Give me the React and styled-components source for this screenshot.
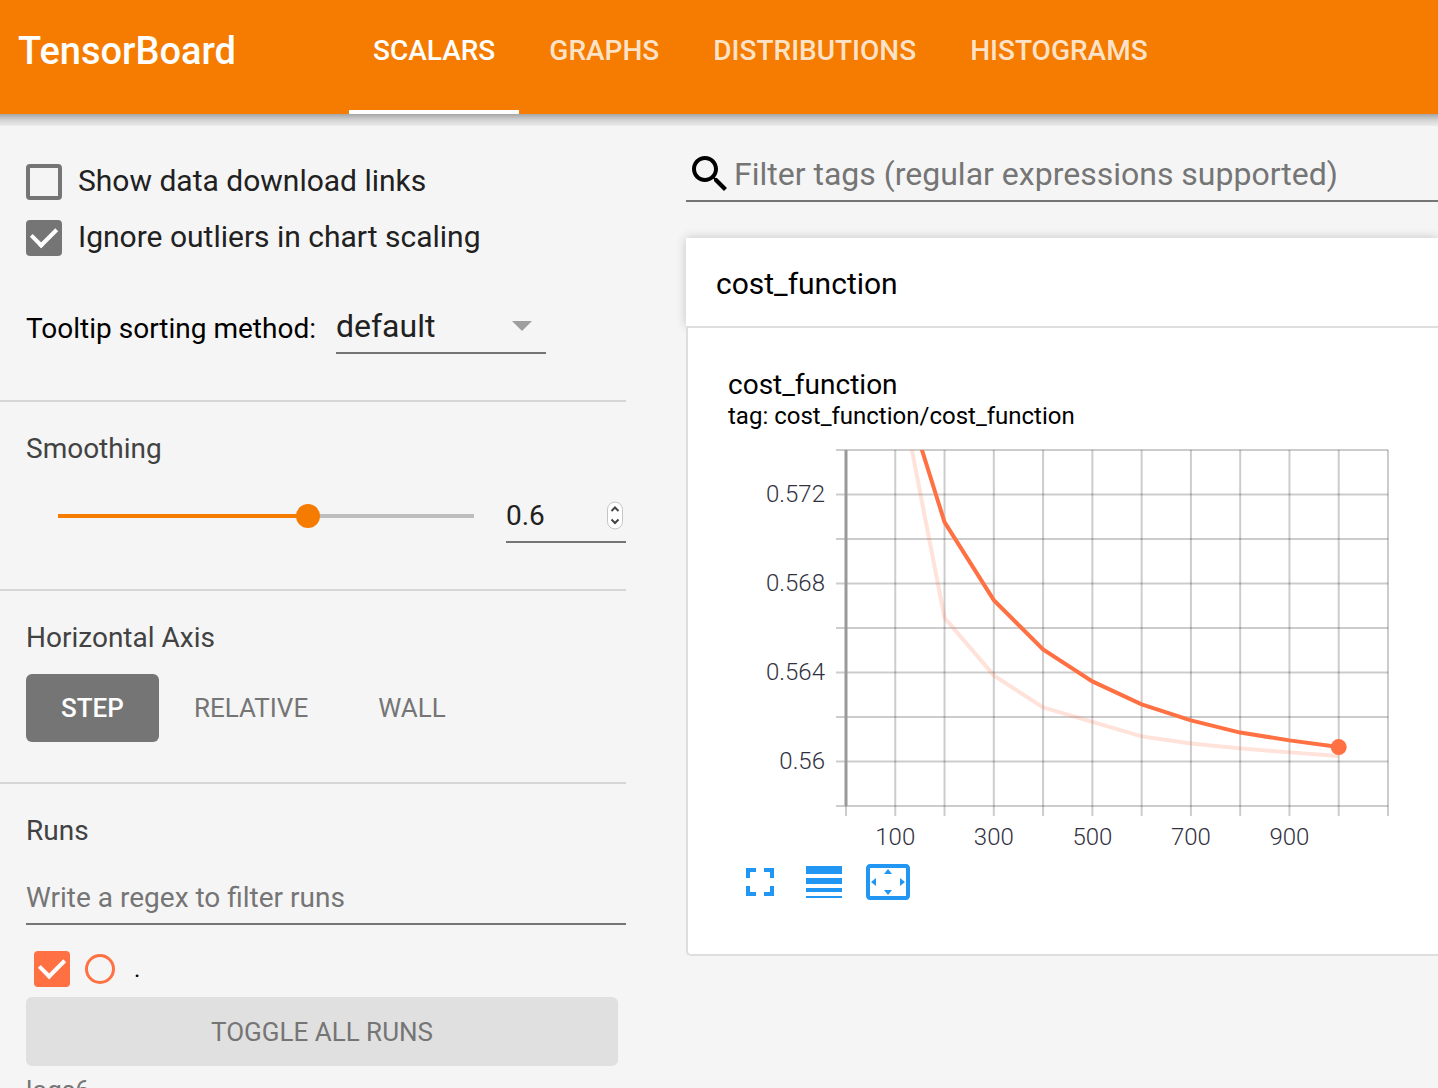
import React, { useState } from "react";
import styled, { createGlobalStyle } from "styled-components";

const GlobalStyle = createGlobalStyle`
  * { box-sizing: border-box; }
  body {
    margin: 0;
    background: #f5f5f5;
    color: #212121;
    font-family: Roboto, "Liberation Sans", sans-serif;
  }
  button, input, select { font-family: inherit; margin: 0; }
`;

const Page = styled.div`
  display: flex;
  flex-direction: column;
  height: 100vh;
  overflow: hidden;
`;

const Header = styled.header`
  position: relative;
  z-index: 1;
  flex: none;
  display: flex;
  height: 114px;
  background: #f57c00;
  color: #fff;
  &::after {
    content: "";
    position: absolute;
    top: 100%;
    left: 0;
    right: 0;
    height: 12px;
    background: linear-gradient(rgba(0, 0, 0, 0.32), rgba(0, 0, 0, 0.14) 50%, rgba(0, 0, 0, 0.04));
    pointer-events: none;
  }
`;

const Brand = styled.h1`
  flex: 0 0 331px;
  margin: 0 0 0 18px;
  font-size: 38px;
  font-weight: 500;
  line-height: 102px;
`;

const Tabs = styled.nav`
  display: flex;
  gap: 6px;
`;

const Tab = styled.button`
  padding: 0 24px 8px;
  border: 0;
  border-bottom: 4px solid ${(p) => (p.$active ? "#fff" : "transparent")};
  background: none;
  color: ${(p) => (p.$active ? "#fff" : "rgba(255, 255, 255, 0.8)")};
  font-size: 28px;
  font-weight: 500;
  line-height: 102px;
`;

const Body = styled.div`
  flex: 1;
  min-height: 0;
  display: grid;
  grid-template-columns: 626px minmax(0, 1fr);
  column-gap: 60px;
`;

const Sidebar = styled.aside`
  min-height: 0;
  overflow: hidden;
`;

const Section = styled.section`
  padding: ${(p) => p.$top || 30}px 0 ${(p) => p.$bottom || 46}px 26px;
  border-bottom: ${(p) => (p.$last ? "0" : "2px solid #d6d6d6")};
`;

const SectionTitle = styled.h2`
  margin: 0;
  color: #424242;
  font-size: 28px;
  font-weight: 400;
  line-height: 34px;
`;

const CheckRow = styled.div`
  display: flex;
  gap: 16px;
  height: 36px;
  margin-bottom: 20px;
  font-size: 30px;
  line-height: 34px;
`;

const CheckInput = styled.input`
  appearance: none;
  flex: none;
  display: grid;
  place-items: start center;
  width: 36px;
  height: 36px;
  border: 4px solid ${(p) => p.$color};
  border-radius: 4px;
  &:checked { background: ${(p) => p.$color}; }
  &:checked::after {
    content: "";
    width: 12px;
    height: 20px;
    margin-top: -2px;
    border: solid #fff;
    border-width: 0 4px 4px 0;
    transform: rotate(45deg);
  }
`;

const SortRow = styled.div`
  display: flex;
  align-items: flex-end;
  gap: 20px;
  margin-top: 44px;
  color: #000;
  font-size: 28px;
  line-height: 50px;
`;

const SelectField = styled.div`
  display: grid;
  align-items: center;
  width: 210px;
  border-bottom: 2px solid #757575;
  & > * { grid-area: 1 / 1; }
  svg { justify-self: end; margin-right: 14px; pointer-events: none; }
`;

const Select = styled.select`
  appearance: none;
  width: 100%;
  height: 52px;
  padding: 0;
  border: 0;
  background: none;
  color: #212121;
  font-size: 32px;
`;

const SliderRow = styled.div`
  display: flex;
  align-items: center;
  margin-top: 23px;
`;

const Slider = styled.input`
  appearance: none;
  flex: 1;
  min-width: 0;
  height: 24px;
  margin: 0 20px;
  background: linear-gradient(
    to right,
    transparent 12px,
    #f57c00 12px,
    #f57c00 60%,
    #bdbdbd 60%,
    #bdbdbd calc(100% - 12px),
    transparent calc(100% - 12px)
  ) center / 100% 4px no-repeat;
  &::-webkit-slider-thumb {
    appearance: none;
    width: 24px;
    height: 24px;
    border-radius: 50%;
    background: #f57c00;
  }
`;

const NumberField = styled.div`
  display: flex;
  align-items: center;
  width: 120px;
  border-bottom: 2px solid #757575;
`;

const NumberInput = styled.input`
  appearance: textfield;
  flex: 1;
  min-width: 0;
  height: 52px;
  padding: 0;
  border: 0;
  background: none;
  color: #212121;
  font-size: 28px;
  &::-webkit-inner-spin-button { appearance: none; }
`;

const ButtonRow = styled.div`
  display: flex;
  margin-top: 19px;
`;

const AxisButton = styled.button`
  height: 68px;
  padding: 0 35px;
  border: 0;
  border-radius: 6px;
  background: ${(p) => (p.$active ? "#757575" : "none")};
  color: ${(p) => (p.$active ? "#fff" : "#757575")};
  font-size: 26px;
  font-weight: ${(p) => (p.$active ? 500 : 400)};
`;

const RegexInput = styled.input`
  display: block;
  width: 100%;
  height: 54px;
  margin-top: 23px;
  padding: 0;
  border: 0;
  border-bottom: 2px solid #757575;
  background: none;
  font-size: 28px;
  &::placeholder { color: #757575; opacity: 1; }
`;

const RunRow = styled.div`
  display: flex;
  align-items: center;
  gap: 15px;
  margin: 26px 8px 10px;
`;

const RunColor = styled.button`
  width: 30px;
  height: 30px;
  padding: 0;
  border: 3px solid #ff7043;
  border-radius: 50%;
  background: none;
`;

const RunName = styled.label`
  padding-left: 4px;
  color: #000;
  font-size: 24px;
  line-height: 28px;
`;

const ToggleButton = styled.button`
  display: block;
  width: calc(100% - 8px);
  height: 69px;
  border: 0;
  border-radius: 6px;
  background: #e0e0e0;
  color: #757575;
  font-size: 26px;
`;

const LogDir = styled.div`
  margin-top: 8px;
  color: #757575;
  font-size: 26px;
  line-height: 32px;
`;

const Main = styled.main`
  min-width: 0;
  padding-top: 34px;
`;

const Search = styled.label`
  display: flex;
  align-items: center;
  height: 54px;
  border-bottom: 2px solid #757575;
  color: #000;
`;

const SearchInput = styled.input`
  flex: 1;
  min-width: 0;
  height: 52px;
  padding: 0;
  border: 0;
  background: none;
  font-size: 32px;
  &::placeholder { color: #757575; opacity: 1; }
`;

const CategoryTitle = styled.h3`
  margin: 36px 0 0;
  padding: 4px 30px 0;
  background: #fff;
  box-shadow: 0 0 10px rgba(0, 0, 0, 0.2);
  color: #000;
  font-size: 30px;
  font-weight: 400;
  line-height: 84px;
`;

const Pane = styled.div`
  position: relative;
  padding: 40px 0 48px 40px;
  border: 2px solid #dedede;
  border-right: 0;
  border-radius: 0 0 0 5px;
  background: #fff;
  color: #000;
`;

const ChartTitle = styled.div`
  font-size: 28px;
  line-height: 34px;
`;

const ChartTag = styled.div`
  padding-bottom: 2px;
  font-size: 24px;
  line-height: 28px;
`;

const Chart = styled.svg`
  display: block;
  width: 670px;
  height: 426px;
  text { font-size: 24px; font-weight: 300; fill: #32313f; }
`;

const Tools = styled.div`
  display: flex;
  gap: 16px;
  padding-left: 8px;
`;

const ToolButton = styled.button`
  width: 48px;
  height: 48px;
  padding: 0;
  border: 0;
  background: none;
  color: #2196f3;
  svg { display: block; }
`;

const Icon = ({ d }) => (
  <svg width="48" height="48" viewBox="0 0 24 24" fill="currentColor" aria-hidden="true">
    <path d={d} />
  </svg>
);

const ICONS = {
  search:
    "M15.5 14h-.79l-.28-.27C15.41 12.59 16 11.11 16 9.5 16 5.91 13.09 3 9.5 3S3 5.91 3 9.5 5.91 16 9.5 16c1.61 0 3.09-.59 4.23-1.57l.27.28v.79l5 4.99L20.49 19l-4.99-5zm-6 0C7.01 14 5 11.99 5 9.5S7.01 5 9.5 5 14 7.01 14 9.5 11.99 14 9.5 14z",
  fullscreen:
    "M7 14H5v5h5v-2H7v-3zm-2-4h2V7h3V5H5v5zm12 7h-3v2h5v-5h-2v3zM14 5v2h3v3h2V5h-5z",
  lineWeight: "M3 17h18v-2H3v2zm0 3h18v-1H3v1zm0-7h18v-3H3v3zm0-9v4h18V4H3z",
  overscan:
    "M12.01 5.5L10 8h4l-1.99-2.5zM18 10v4l2.5-1.99L18 10zM6 10l-2.5 2.01L6 14v-4zm8 6h-4l2.01 2.5L14 16zm7-13H3c-1.1 0-2 .9-2 2v14c0 1.1.9 2 2 2h18c1.1 0 2-.9 2-2V5c0-1.1-.9-2-2-2zm0 16.01H3V4.99h18v14.02z",
};

const smoothed = [0.57783, 0.57076, 0.56725, 0.56504, 0.5636, 0.56257, 0.56185, 0.5613, 0.56095, 0.56065];
const raw = [0.57783, 0.56646, 0.56387, 0.56243, 0.56178, 0.56113, 0.56081, 0.56059, 0.56041, 0.56025];

const PLOT = { left: 118, right: 660, top: 18, bottom: 374 };
const xAt = (step) => PLOT.left + (step * (PLOT.right - PLOT.left)) / 1100;
const yAt = (value) => PLOT.top + ((0.574 - value) * (PLOT.bottom - PLOT.top)) / 0.016;
const toPoints = (values) => values.map((v, i) => `${xAt((i + 1) * 100)},${yAt(v)}`).join(" ");

function CostChart() {
  const columns = Array.from({ length: 12 }, (_, i) => i * 100);
  const rows = Array.from({ length: 9 }, (_, i) => 0.558 + i * 0.002);
  return (
    <Chart viewBox="0 0 670 426" role="img" aria-label="cost_function">
      <clipPath id="plot-area">
        <rect x={PLOT.left} y={PLOT.top} width={PLOT.right - PLOT.left} height={PLOT.bottom - PLOT.top} />
      </clipPath>
      <g stroke="#000" strokeOpacity="0.2" strokeWidth="2">
        {columns.map((s) => (
          <line key={s} x1={xAt(s)} x2={xAt(s)} y1={PLOT.top} y2={PLOT.bottom + 10} />
        ))}
        {rows.map((v) => (
          <line key={v} x1={PLOT.left - 10} x2={PLOT.right} y1={yAt(v)} y2={yAt(v)} />
        ))}
      </g>
      <line x1={PLOT.left} x2={PLOT.left} y1={PLOT.top} y2={PLOT.bottom} stroke="#999" strokeWidth="3" />
      <g clipPath="url(#plot-area)" fill="none" stroke="#ff7043" strokeWidth="4">
        <polyline points={toPoints(raw)} strokeOpacity="0.2" />
        <polyline points={toPoints(smoothed)} />
      </g>
      <circle cx={xAt(1000)} cy={yAt(smoothed[9])} r="8" fill="#ff7043" />
      {["0.572", "0.568", "0.564", "0.56"].map((t) => (
        <text key={t} x="97" y={yAt(Number(t)) + 7} textAnchor="end">{t}</text>
      ))}
      {[100, 300, 500, 700, 900].map((s) => (
        <text key={s} x={xAt(s)} y="413" textAnchor="middle">{s}</text>
      ))}
    </Chart>
  );
}

const TABS = ["SCALARS", "GRAPHS", "DISTRIBUTIONS", "HISTOGRAMS"];
const AXES = ["STEP", "RELATIVE", "WALL"];

export default function App() {
  const [tab, setTab] = useState("SCALARS");
  const [axis, setAxis] = useState("STEP");
  return (
    <>
      <GlobalStyle />
      <Page>
        <Header>
          <Brand>TensorBoard</Brand>
          <Tabs>
            {TABS.map((t) => (
              <Tab key={t} $active={t === tab} onClick={() => setTab(t)}>{t}</Tab>
            ))}
          </Tabs>
        </Header>
        <Body>
          <Sidebar>
            <Section $top={50}>
              <CheckRow>
                <CheckInput id="links" type="checkbox" $color="#757575" />
                <label htmlFor="links">Show data download links</label>
              </CheckRow>
              <CheckRow>
                <CheckInput id="outliers" type="checkbox" $color="#757575" defaultChecked />
                <label htmlFor="outliers">Ignore outliers in chart scaling</label>
              </CheckRow>
              <SortRow>
                <label htmlFor="sorting">Tooltip sorting method:</label>
                <SelectField>
                  <Select id="sorting">
                    <option>default</option>
                    <option>descending</option>
                    <option>ascending</option>
                    <option>nearest</option>
                  </Select>
                  <svg width="20" height="10" viewBox="0 0 20 10" aria-hidden="true">
                    <path d="M0 0h20L10 10z" fill="#9e9e9e" />
                  </svg>
                </SelectField>
              </SortRow>
            </Section>
            <Section>
              <SectionTitle id="smoothing">Smoothing</SectionTitle>
              <SliderRow>
                <Slider type="range" min="0" max="1" step="0.001" defaultValue="0.6" aria-labelledby="smoothing" />
                <NumberField>
                  <NumberInput type="number" step="0.001" defaultValue="0.6" aria-labelledby="smoothing" />
                  <svg width="22" height="34" viewBox="0 0 22 34" aria-hidden="true">
                    <rect x="3.5" y="4" width="15" height="27" rx="7.5" fill="#fff" stroke="#c4c4c4" />
                    <path d="M7.5 13l3.5-3.5 3.5 3.5M7.5 21.5l3.5 3.5 3.5-3.5" fill="none" stroke="#444" strokeWidth="2" />
                  </svg>
                </NumberField>
              </SliderRow>
            </Section>
            <Section $bottom={40}>
              <SectionTitle>Horizontal Axis</SectionTitle>
              <ButtonRow>
                {AXES.map((a) => (
                  <AxisButton key={a} $active={a === axis} onClick={() => setAxis(a)}>{a}</AxisButton>
                ))}
              </ButtonRow>
            </Section>
            <Section $last>
              <SectionTitle id="runs">Runs</SectionTitle>
              <RegexInput type="text" placeholder="Write a regex to filter runs" aria-labelledby="runs" />
              <RunRow>
                <CheckInput id="run" type="checkbox" $color="#ff7043" defaultChecked />
                <RunColor aria-label="Show only this run" />
                <RunName htmlFor="run">.</RunName>
              </RunRow>
              <ToggleButton>TOGGLE ALL RUNS</ToggleButton>
              <LogDir>logs6</LogDir>
            </Section>
          </Sidebar>
          <Main>
            <Search>
              <Icon d={ICONS.search} />
              <SearchInput
                type="text"
                placeholder="Filter tags (regular expressions supported)"
                aria-label="Filter tags"
              />
            </Search>
            <CategoryTitle>cost_function</CategoryTitle>
            <Pane>
              <ChartTitle>cost_function</ChartTitle>
              <ChartTag>tag: cost_function/cost_function</ChartTag>
              <CostChart />
              <Tools>
                <ToolButton aria-label="Toggle full size"><Icon d={ICONS.fullscreen} /></ToolButton>
                <ToolButton aria-label="Toggle log scale"><Icon d={ICONS.lineWeight} /></ToolButton>
                <ToolButton aria-label="Fit domain to data"><Icon d={ICONS.overscan} /></ToolButton>
              </Tools>
            </Pane>
          </Main>
        </Body>
      </Page>
    </>
  );
}
